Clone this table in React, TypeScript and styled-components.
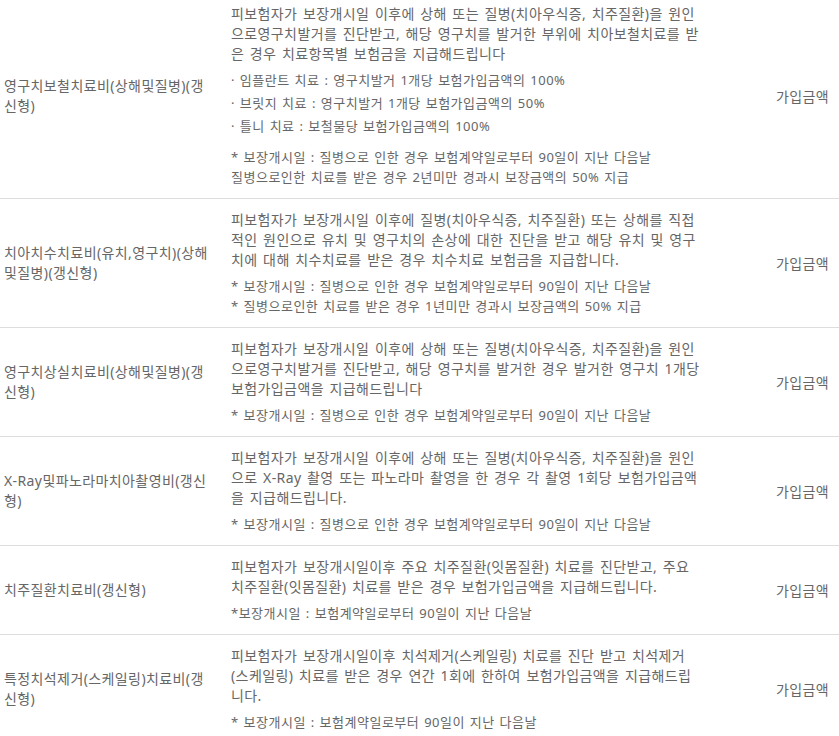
import React from "react";
import styled, { createGlobalStyle } from "styled-components";

const GlobalStyle = createGlobalStyle`
  html, body {
    margin: 0;
    padding: 0;
    background: #fff;
  }
  body {
    font-family: "Noto Sans", "Noto Sans CJK KR", sans-serif;
    font-size: 14px;
    letter-spacing: 0.4px;
    word-spacing: 1.5px;
    color: #666;
    overflow: hidden;
  }
`;

type Coverage = {
  name: string[];
  desc: string[];
  bullets?: string[];
  notes: string[];
  amount: string;
};

const START = "* 보장개시일 : 질병으로 인한 경우 보험계약일로부터 90일이 지난 다음날";

const rows: Coverage[] = [
  {
    name: ["영구치보철치료비(상해및질병)(갱", "신형)"],
    desc: [
      "피보험자가 보장개시일 이후에 상해 또는 질병(치아우식증, 치주질환)을 원인",
      "으로영구치발거를 진단받고, 해당 영구치를 발거한 부위에 치아보철치료를 받",
      "은 경우 치료항목별 보험금을 지급해드립니다",
    ],
    bullets: [
      "· 임플란트 치료 : 영구치발거 1개당 보험가입금액의 100%",
      "· 브릿지 치료 : 영구치발거 1개당 보험가입금액의 50%",
      "· 틀니 치료 : 보철물당 보험가입금액의 100%",
    ],
    notes: [START, "질병으로인한 치료를 받은 경우 2년미만 경과시 보장금액의 50% 지급"],
    amount: "가입금액",
  },
  {
    name: ["치아치수치료비(유치,영구치)(상해", "및질병)(갱신형)"],
    desc: [
      "피보험자가 보장개시일 이후에 질병(치아우식증, 치주질환) 또는 상해를 직접",
      "적인 원인으로 유치 및 영구치의 손상에 대한 진단을 받고 해당 유치 및 영구",
      "치에 대해 치수치료를 받은 경우 치수치료 보험금을 지급합니다.",
    ],
    notes: [START, "* 질병으로인한 치료를 받은 경우 1년미만 경과시 보장금액의 50% 지급"],
    amount: "가입금액",
  },
  {
    name: ["영구치상실치료비(상해및질병)(갱", "신형)"],
    desc: [
      "피보험자가 보장개시일 이후에 상해 또는 질병(치아우식증, 치주질환)을 원인",
      "으로영구치발거를 진단받고, 해당 영구치를 발거한 경우 발거한 영구치 1개당",
      "보험가입금액을 지급해드립니다",
    ],
    notes: [START],
    amount: "가입금액",
  },
  {
    name: ["X-Ray및파노라마치아촬영비(갱신", "형)"],
    desc: [
      "피보험자가 보장개시일 이후에 상해 또는 질병(치아우식증, 치주질환)을 원인",
      "으로 X-Ray 촬영 또는 파노라마 촬영을 한 경우 각 촬영 1회당 보험가입금액",
      "을 지급해드립니다.",
    ],
    notes: [START],
    amount: "가입금액",
  },
  {
    name: ["치주질환치료비(갱신형)"],
    desc: [
      "피보험자가 보장개시일이후 주요 치주질환(잇몸질환) 치료를 진단받고, 주요",
      "치주질환(잇몸질환) 치료를 받은 경우 보험가입금액을 지급해드립니다.",
    ],
    notes: ["*보장개시일 : 보험계약일로부터 90일이 지난 다음날"],
    amount: "가입금액",
  },
  {
    name: ["특정치석제거(스케일링)치료비(갱", "신형)"],
    desc: [
      "피보험자가 보장개시일이후 치석제거(스케일링) 치료를 진단 받고 치석제거",
      "(스케일링) 치료를 받은 경우 연간 1회에 한하여 보험가입금액을 지급해드립",
      "니다.",
    ],
    notes: ["* 보장개시일 : 보험계약일로부터 90일이 지난 다음날"],
    amount: "가입금액",
  },
];

export default function App() {
  return (
    <>
      <GlobalStyle />
      <Table>
        {rows.map((row, i) => (
          <Row key={i}>
            <NameCell>
              {row.name.map((l, j) => (
                <Line key={j}>{l}</Line>
              ))}
            </NameCell>
            <DescCell>
              <Para>
                {row.desc.map((l, j) => (
                  <Line key={j}>{l}</Line>
                ))}
              </Para>
              {row.bullets && (
                <Bullets>
                  {row.bullets.map((l, j) => (
                    <Bullet key={j}>{l}</Bullet>
                  ))}
                </Bullets>
              )}
              <Notes>
                {row.notes.map((l, j) => (
                  <Line key={j}>{l}</Line>
                ))}
              </Notes>
            </DescCell>
            <AmountCell>{row.amount}</AmountCell>
          </Row>
        ))}
      </Table>
    </>
  );
}

const Table = styled.div`
  margin-top: -7px;
  width: 839px;
`;

const Row = styled.div`
  display: grid;
  grid-template-columns: 222px 544px 73px;
  border-bottom: 1px solid #dddddd;
`;

const Line = styled.span`
  display: block;
  white-space: nowrap;
  line-height: 20px;
`;

const NameCell = styled.div`
  display: flex;
  flex-direction: column;
  justify-content: center;
  padding: 11px 0 11px 4px;
`;

const DescCell = styled.div`
  padding: 11px 0 11px 9px;
`;

const Para = styled.div`
  margin: 0;
`;

const Bullets = styled.ul`
  list-style: none;
  margin: 6px 0 0;
  padding: 0;
  font-size: 13px;
  letter-spacing: 0.5px;
  word-spacing: 1px;
`;

const Bullet = styled.li`
  line-height: 20px;
  white-space: nowrap;
  margin-bottom: 3px;
`;

const Notes = styled.div`
  margin-top: 6px;
  font-size: 13px;
  letter-spacing: 0.5px;
  word-spacing: 1px;
  ul + & {
    margin-top: 11px;
  }
`;

const AmountCell = styled.div`
  display: flex;
  align-items: center;
  justify-content: center;
  white-space: nowrap;
`;
